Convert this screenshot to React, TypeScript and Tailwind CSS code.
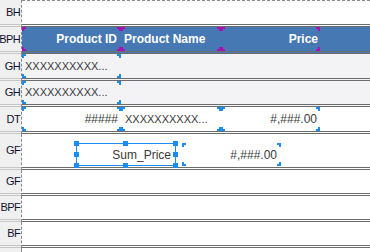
import type { ReactNode } from 'react';

const font = { fontFamily: '"Liberation Sans", Arial, sans-serif' };

// corner ticks around a band cell
const Marks = ({ color }: { color: string }) => (
  <>
    <span className={`absolute left-0 top-0 w-[4px] h-[4px] border-l-2 border-t-2 ${color}`} />
    <span className={`absolute right-0 top-0 w-[4px] h-[4px] border-r-2 border-t-2 ${color}`} />
    <span className={`absolute left-0 bottom-0 w-[4px] h-[4px] border-l-2 border-b-2 ${color}`} />
    <span className={`absolute right-0 bottom-0 w-[4px] h-[4px] border-r-2 border-b-2 ${color}`} />
  </>
);

const Cell = ({
  className,
  color = 'border-[#1a8cf2]',
  children,
}: {
  className: string;
  color?: string;
  children?: ReactNode;
}) => (
  <div className={`relative h-full shrink-0 flex items-center whitespace-nowrap ${className}`}>
    <Marks color={color} />
    {children}
  </div>
);

const Band = ({
  label,
  height,
  content,
  children,
}: {
  label: string;
  height: string;
  content: string;
  children?: ReactNode;
}) => (
  <div className={`flex ${height}`}>
    <div className="w-[21px] shrink-0 flex items-center justify-end pr-[1px] bg-[#f0f0f0] border-b-[3px] border-double border-[#c6c6c6] text-[11px] tracking-[-0.6px] text-[#10102c]">
      {label}
    </div>
    <div className="w-px shrink-0 border-l border-dashed border-[#8a8a8a]" />
    <div className={`flex-1 min-w-0 border-b-[3px] border-double border-[#6d6d6d] ${content}`}>{children}</div>
  </div>
);

const Handle = ({ className }: { className: string }) => (
  <span className={`absolute w-[5px] h-[5px] bg-[#1a8cf2] ${className}`} />
);

export default function App() {
  return (
    <div className="w-[370px] h-[252px] overflow-hidden bg-white flex flex-col" style={font}>
      <Band label="BH" height="h-[27px]" content="bg-white">
        <div className="h-px border-t border-dashed border-[#8a8a8a]" />
      </Band>

      <Band label="BPH" height="h-[27px]" content="bg-[#4678b3] flex text-white font-bold text-[12px]">
        <Cell className="w-[99px] justify-end pr-[4px]" color="border-[#a812b4]">Product ID</Cell>
        <Cell className="w-[100px] pl-[3px]" color="border-[#a812b4]">Product Name</Cell>
        <Cell className="w-[99px] justify-end pr-[2px]" color="border-[#a812b4]">Price</Cell>
      </Band>

      <Band label="GH" height="h-[27px]" content="bg-[#f3f2f5] flex text-[11px] text-[#3a3a3a]">
        <Cell className="w-[99px] pl-[3px]">XXXXXXXXXX...</Cell>
      </Band>

      <Band label="GH" height="h-[26px]" content="bg-[#f3f2f5] flex text-[11px] text-[#3a3a3a]">
        <Cell className="w-[99px] pl-[3px]">XXXXXXXXXX...</Cell>
      </Band>

      <Band label="DT" height="h-[27px]" content="bg-white flex text-[12px] text-[#3a3a3a]">
        <Cell className="w-[99px] justify-end pr-[3px]">#####</Cell>
        <Cell className="w-[100px] pl-[4px] text-[11px]">XXXXXXXXXX...</Cell>
        <Cell className="w-[99px] justify-end pr-[3px]">#,###.00</Cell>
      </Band>

      <Band label="GF" height="h-[36px]" content="bg-white pt-[9px] text-[12px] text-[#3a3a3a]">
        <div className="flex h-[23px]">
          <div className="relative ml-[54px] w-[100px] h-full shrink-0 flex items-center justify-end pr-[4px] border border-[#1a8cf2]">
            Sum_Price
            <Handle className="-left-[3px] -top-[3px]" />
            <Handle className="left-[46px] -top-[3px]" />
            <Handle className="-right-[3px] -top-[3px]" />
            <Handle className="-left-[3px] top-[8px]" />
            <Handle className="-right-[3px] top-[8px]" />
            <Handle className="-left-[3px] -bottom-[3px]" />
            <Handle className="left-[46px] -bottom-[3px]" />
            <Handle className="-right-[3px] -bottom-[3px]" />
          </div>
          <Cell className="ml-[6px] w-[99px] justify-end pr-[4px]">#,###.00</Cell>
        </div>
      </Band>

      <Band label="GF" height="h-[26px]" content="bg-white" />
      <Band label="BPF" height="h-[26px]" content="bg-white" />
      <Band label="BF" height="h-[26px]" content="bg-white" />

      <div className="flex flex-1">
        <div className="w-[21px] shrink-0 bg-[#f0f0f0]" />
        <div className="w-px shrink-0 border-l border-dashed border-[#8a8a8a]" />
        <div className="flex-1 bg-white" />
      </div>
    </div>
  );
}
